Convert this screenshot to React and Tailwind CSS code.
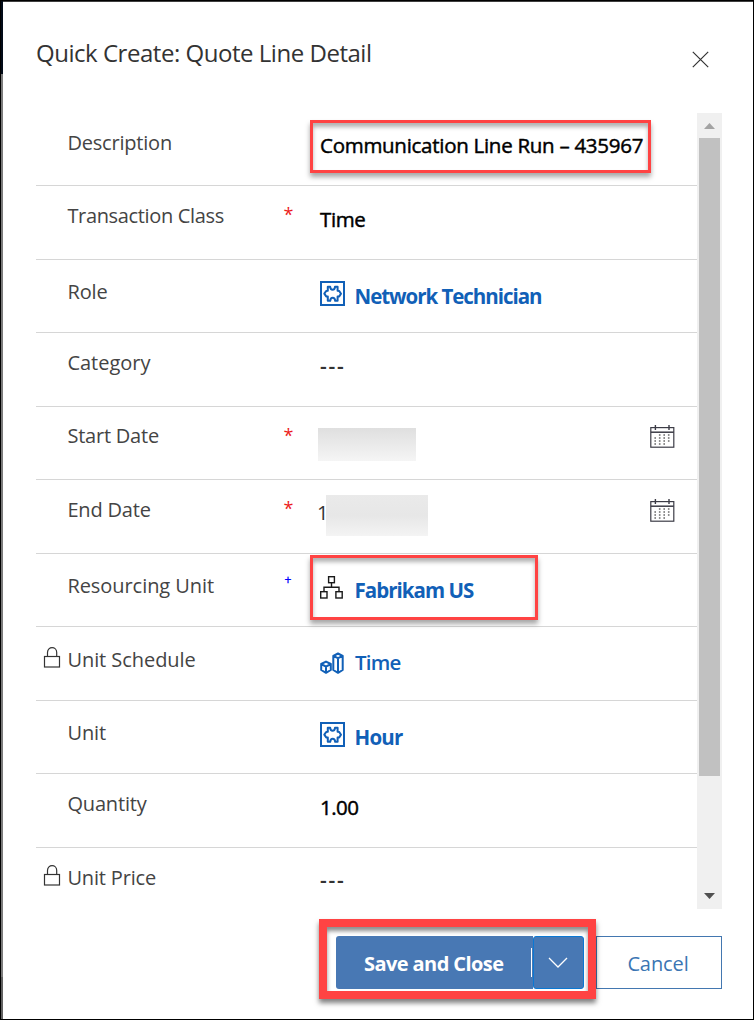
import React from "react";

function PuzzleIcon() {
  return (
    <svg width="25" height="25" viewBox="0 0 25 25" fill="none" stroke="#1160b7" className="block">
      <rect x="1" y="1" width="23" height="23" strokeWidth="2" />
      <path
        d="M7.8 5.8H10.2C10.4 9.8 14.8 9.8 15 5.8H17.6V9.8L19.2 10L21 12.7L19.2 15.4L17.6 15.6V19.8H15.2C14.8 15.6 10.6 15.6 10.2 19.8H7.8V15.6L6.2 15.4L4.3 12.7L6.2 10L7.8 9.8Z"
        strokeWidth="2"
        strokeLinejoin="round"
      />
    </svg>
  );
}

function OrgIcon() {
  return (
    <svg width="23" height="23" viewBox="0 0 23 23" fill="none" stroke="#1a1a1a" strokeWidth="1.4" className="block">
      <rect x="8.6" y="0.7" width="5.8" height="6" />
      <rect x="0.7" y="15.7" width="6.3" height="6.3" />
      <rect x="15.9" y="15.7" width="6.3" height="6.3" />
      <path d="M11.5 6.7V11.3M4 15.7V11.3H19V15.7" />
    </svg>
  );
}

function BlocksIcon() {
  return (
    <svg width="25" height="23" viewBox="0 0 25 23" fill="none" stroke="#1160b7" strokeWidth="2" strokeLinejoin="round" className="block">
      <path d="M13.3 4L18 1.5L22.7 4V18L18 20.8L13.3 18ZM13.3 4L18 6.2L22.7 4M18 6.2V20.6" />
      <path d="M1.2 12L6 9.6L10.8 12V18L6 20.8L1.2 18ZM1.2 12L6 14.6L10.8 12M6 14.6V20.6" />
    </svg>
  );
}

function LockIcon() {
  return (
    <svg width="18" height="23" viewBox="0 0 18 23" fill="none" stroke="#333" strokeWidth="1.2" className="block">
      <rect x="1.5" y="9.5" width="15" height="10.5" />
      <path d="M4.5 9.5V5.5C4.5 -1 13.7 -1 13.7 5.5V9.5" />
    </svg>
  );
}

function CalendarIcon() {
  const dots = [];
  for (let r = 0; r < 4; r++) {
    for (let c = 0; c < 4; c++) {
      if ((r === 0 && c === 0) || (r === 3 && c === 3)) continue;
      dots.push(<rect key={r + "-" + c} x={4.4 + c * 4.5} y={9.4 + r * 3} width="1.6" height="1.2" fill="#444" stroke="none" />);
    }
  }
  return (
    <svg width="25" height="24" viewBox="0 0 25 24" fill="none" stroke="#3c3c46" strokeWidth="1.2" className="block">
      <rect x="0.8" y="2.6" width="23" height="19.6" />
      <path d="M0.8 7.2H23.8" strokeWidth="1.5" />
      <path d="M5.4 0V5M19 0V5" strokeWidth="1.4" />
      {dots}
    </svg>
  );
}

const strong = "text-[20.5px] text-black [-webkit-text-stroke:0.45px_black]";
const link = "text-[20.5px] font-bold text-[#1160b7] -ml-[0.5px]";
const dashes = "text-[21px] font-semibold text-[#333] tracking-[1.8px]";

const rows = [
  { label: "Description", track: "tracking-[-0.2px]", h: "h-[73px]", lp: "pt-[16px]", value: "Communication Line Run – 435967", vc: strong + " tracking-[-0.28px]", vp: "pt-[18px]" },
  { label: "Transaction Class", track: "tracking-[-0.34px]", h: "h-[74px]", lp: "pt-[16px]", mark: "*", value: "Time", vc: strong + " tracking-[-0.4px]", vp: "pt-[19px]" },
  { label: "Role", track: "tracking-[-0.1px]", h: "h-[73px]", lp: "pt-[18px]", icon: <PuzzleIcon />, ip: "pt-[21px]", value: "Network Technician", vc: link + " tracking-[-1.04px]", vp: "pt-[22px]" },
  { label: "Category", track: "tracking-[0px]", h: "h-[74px]", lp: "pt-[16px]", value: "---", vc: dashes, vp: "pt-[19px]" },
  { label: "Start Date", track: "tracking-[-0.22px]", h: "h-[73px]", lp: "pt-[15px]", mark: "*", blur: "start" },
  { label: "End Date", track: "tracking-[-0.18px]", h: "h-[74px]", lp: "pt-[16px]", mark: "*", blur: "end" },
  { label: "Resourcing Unit", track: "tracking-[-0.06px]", h: "h-[73px]", lp: "pt-[18px]", mark: "+", icon: <OrgIcon />, ip: "pt-[22px]", value: "Fabrikam US", vc: link + " tracking-[-0.98px]", vp: "pt-[22px]" },
  { label: "Unit Schedule", track: "tracking-[-0.06px]", h: "h-[74px]", lp: "pt-[19px]", lock: "pt-[20px]", icon: <BlocksIcon />, ip: "pt-[25px]", value: "Time", vc: "text-[20.5px] font-semibold text-[#1160b7] tracking-[-0.8px]", vp: "pt-[21px]" },
  { label: "Unit", track: "tracking-[-0.1px]", h: "h-[73px]", lp: "pt-[18px]", icon: <PuzzleIcon />, ip: "pt-[21px]", value: "Hour", vc: link + " tracking-[-0.8px]", vp: "pt-[22px]" },
  { label: "Quantity", track: "tracking-[-0.16px]", h: "h-[74px]", lp: "pt-[16px]", value: "1.00", vc: strong + " tracking-[-0.5px]", vp: "pt-[19px]" },
  { label: "Unit Price", track: "tracking-[-0.16px]", h: "h-[61px]", lp: "pt-[16px]", lock: "pt-[17px]", value: "---", vc: dashes, vp: "pt-[18px]", last: true },
];

function DateValue({ kind }) {
  if (kind === "start") {
    return (
      <div className="flex flex-1 justify-between pr-[22px]">
        <div className="-ml-[2px] mt-[21px] h-[33px] w-[98px] bg-linear-to-b from-[#dfdfdf] to-[#f5f5f5]" />
        <div className="pt-[18px]"><CalendarIcon /></div>
      </div>
    );
  }
  return (
    <div className="flex flex-1 pr-[22px]">
      <div className="-ml-[3px] w-[9px] pt-[19px] text-[20px] leading-[28px] text-[#333]">1</div>
      <div className="relative mt-[15px] h-[41px] w-[102px] bg-linear-to-b from-[#eaeaea] via-[#e7e7e7] to-[#f4f4f4]" />
      <div className="ml-auto pt-[19px]"><CalendarIcon /></div>
    </div>
  );
}

function Row({ row }) {
  return (
    <div className={"flex leading-[28px] whitespace-nowrap " + row.h + (row.last ? "" : " border-b border-[#d6d6d6]")}>
      <div className="flex w-[32px] shrink-0 justify-end pr-[7px]">
        {row.lock && <div className={row.lock}><LockIcon /></div>}
      </div>
      <div className={"-ml-[0.6px] w-[216px] shrink-0 text-[20px] text-[#444] " + row.lp + " " + row.track}>{row.label}</div>
      <div className="w-[36.6px] shrink-0">
        {row.mark === "*" && <div className="pt-[14px] text-[18px] text-[#ec1c1c]">*</div>}
        {row.mark === "+" && <div className="pt-[12px] pl-px text-[12px] text-[#0000ff] [-webkit-text-stroke:0.3px_#0000ff]">+</div>}
      </div>
      {row.blur ? (
        <DateValue kind={row.blur} />
      ) : (
        <>
          {row.icon && <div className={"w-[35px] shrink-0 " + row.ip}>{row.icon}</div>}
          <div className={row.vc + " " + row.vp}>{row.value}</div>
        </>
      )}
    </div>
  );
}

export default function App() {
  return (
    <div className="relative flex h-[1020px] w-[754px] overflow-hidden border border-black bg-white font-['Open_Sans','Noto_Sans',sans-serif]">
      <div className="flex w-[2px] shrink-0 flex-col">
        <div className="h-[73px] bg-[#020b18]" />
        <div className="h-[903px] bg-[#7b7b7b]" />
        <div className="flex-1 bg-[#616161]" />
      </div>
      <div className="flex flex-1 flex-col border-t border-[#3f3f3f]">
        <header className="flex h-[111px] shrink-0 items-start justify-between pl-[33px] pr-[44px]">
          <h1 className="pt-[33px] text-[24px] leading-[36px] tracking-[-0.47px] text-[#333]">Quick Create: Quote Line Detail</h1>
          <svg width="17" height="17" viewBox="0 0 17 17" fill="none" stroke="#333" strokeWidth="1.2" className="mt-[49px]">
            <path d="M0.8 0.8L16.2 16.2M16.2 0.8L0.8 16.2" />
          </svg>
        </header>
        <main className="flex h-[796px] shrink-0 pl-[33px]">
          <div className="w-[661px]">
            {rows.map((r) => <Row key={r.label} row={r} />)}
          </div>
          <div className="flex w-[25px] flex-col items-center bg-[#f0f0f0]">
            <svg width="11" height="6" viewBox="0 0 11 6" className="mt-[10px]"><path d="M5.5 0L11 6H0Z" fill="#a3a3a3" /></svg>
            <div className="mt-[9px] h-[638px] w-[21px] bg-[#c1c1c1]" />
            <svg width="11" height="6" viewBox="0 0 11 6" className="mt-auto mb-[10px]"><path d="M0 0H11L5.5 6Z" fill="#505050" /></svg>
          </div>
        </main>
        <footer className="flex pt-[27px] pl-[333px] text-[20px] leading-[28px]">
          <div className="flex h-[53px] w-[197px] items-center rounded-l-[3px] bg-[#4878b4]">
            <div className="w-[195px] pt-[3px] pl-[28px] font-bold tracking-[-0.58px] whitespace-nowrap text-white">Save and Close</div>
            <div className="h-[29px] w-px shrink-0 bg-white" />
          </div>
          <div className="flex h-[53px] w-[51px] items-center justify-center rounded-[3px] border border-[#0b78d4] bg-[#4878b4] pr-[2px]">
            <svg width="20" height="12" viewBox="0 0 20 12" fill="none" stroke="#fff" strokeWidth="1.3"><path d="M1 1L10 10L19 1" /></svg>
          </div>
          <div className="ml-[12px] flex h-[53px] w-[126px] items-center justify-center border border-[#4377b0] pt-[3px] pr-[2px] tracking-[-0.1px] text-[#3b75b3]">Cancel</div>
        </footer>
      </div>
      <div className="absolute top-[119px] left-[309px] h-[53px] w-[341px] border-3 border-[#ff4343] shadow-[0_4px_5px_rgba(0,0,0,0.35),inset_0_4px_4px_rgba(0,0,0,0.3)]" />
      <div className="absolute top-[554px] left-[309px] h-[65px] w-[228px] border-3 border-[#ff4343] shadow-[0_4px_5px_rgba(0,0,0,0.35),inset_0_4px_4px_rgba(0,0,0,0.3)]" />
      <div className="absolute top-[918px] left-[318px] h-[80px] w-[277px] border-8 border-[#ff4343] shadow-[0_4px_5px_rgba(0,0,0,0.5),inset_0_4px_4px_rgba(0,0,0,0.45)]" />
    </div>
  );
}
